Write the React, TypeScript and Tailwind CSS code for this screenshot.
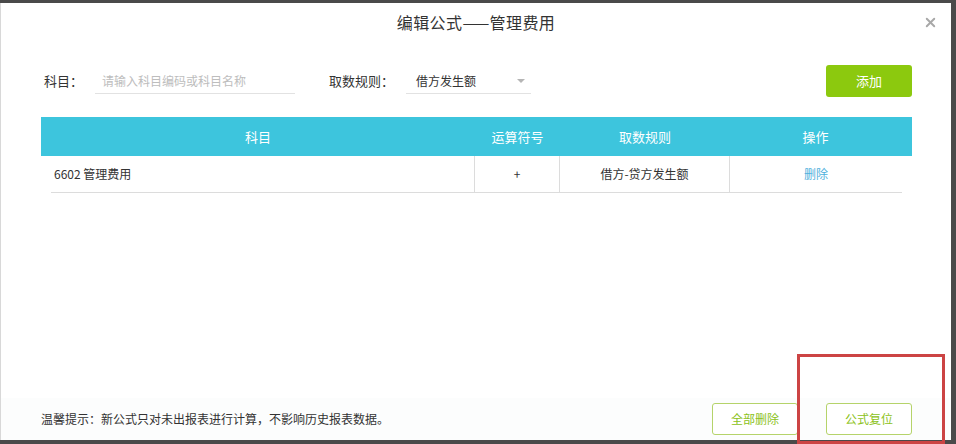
import { X } from "lucide-react";

const font = "font-['Microsoft_YaHei','Noto_Sans_CJK_SC',sans-serif]";

export default function App() {
  return (
    <div className={`w-[956px] h-[444px] bg-[#4a4a4a] pt-[3px] pr-[5px] pb-[4px] ${font}`}>
      <div className="relative h-full bg-white border-l border-[#d8d8d8] flex flex-col">
        {/* title */}
        <div className="h-[38px] flex items-center justify-center relative">
          <span className="text-[16px] text-[#333] tracking-[0.4px]">编辑公式——管理费用</span>
          <X className="absolute right-[13px] top-[12px] text-[#a8a8a8]" size={15} strokeWidth={3} />
        </div>

        {/* filter row */}
        <div className="mt-[24px] h-[32px] flex items-center pl-[43px] pr-[39px]">
          <span className="text-[13px] text-[#333]">科目：</span>
          <div className="ml-[12px] w-[200px] h-[26px] border-b border-[#e2e2e2] flex items-center pl-[7px]">
            <span className="text-[12px] text-[#bdbdbd]">请输入科目编码或科目名称</span>
          </div>
          <span className="ml-[34px] text-[13px] text-[#333]">取数规则：</span>
          <div className="ml-[12px] w-[125px] h-[26px] border-b border-[#e2e2e2] flex items-center justify-between pl-[10px] pr-[6px]">
            <span className="text-[12px] text-[#333]">借方发生额</span>
            <span className="w-0 h-0 border-l-[4px] border-r-[4px] border-t-[4px] border-l-transparent border-r-transparent border-t-[#b5b5b5]" />
          </div>
          <div className="flex-1" />
          <button className="w-[86px] h-[32px] rounded-[3px] bg-[#8cc90e] text-white text-[13px]">添加</button>
        </div>

        {/* table */}
        <div className="mt-[20px] mx-[40px] mr-[39px]">
          <div className="h-[39px] bg-[#3dc5dd] grid grid-cols-[434px_85px_170px_171px_10px] text-white text-[13px]">
            <div className="flex items-center justify-center">科目</div>
            <div className="flex items-center justify-center">运算符号</div>
            <div className="flex items-center justify-center">取数规则</div>
            <div className="flex items-center justify-center">操作</div>
            <div />
          </div>
          <div className="ml-[10px] mr-[10px] h-[37px] border-b border-[#dcdcdc] grid grid-cols-[424px_85px_170px_1fr] text-[12px] text-[#333]">
            <div className="flex items-center pl-[3px] border-r border-[#dcdcdc]">6602 管理费用</div>
            <div className="flex items-center justify-center border-r border-[#dcdcdc]">+</div>
            <div className="flex items-center justify-center border-r border-[#dcdcdc]">借方-贷方发生额</div>
            <div className="flex items-center justify-center text-[#4fb0dc]">删除</div>
          </div>
        </div>

        <div className="flex-1" />

        {/* footer */}
        <div className="h-[42px] flex items-center pl-[40px] pr-[39px] bg-[#fcfdfd]">
          <span className="text-[12px] text-[#333]">温馨提示：新公式只对未出报表进行计算，不影响历史报表数据。</span>
          <div className="flex-1" />
          <button className="w-[86px] h-[32px] rounded-[3px] border border-[#b5d36a] bg-white text-[#8cc220] text-[12px]">全部删除</button>
          <button className="ml-[28px] w-[86px] h-[32px] rounded-[3px] border border-[#b5d36a] bg-white text-[#8cc220] text-[12px]">公式复位</button>
        </div>

        {/* red annotation box */}
        <div className="absolute left-[796px] top-[351px] w-[148px] h-[90px] border-[3px] border-[#cc4444]" />
      </div>
    </div>
  );
}
